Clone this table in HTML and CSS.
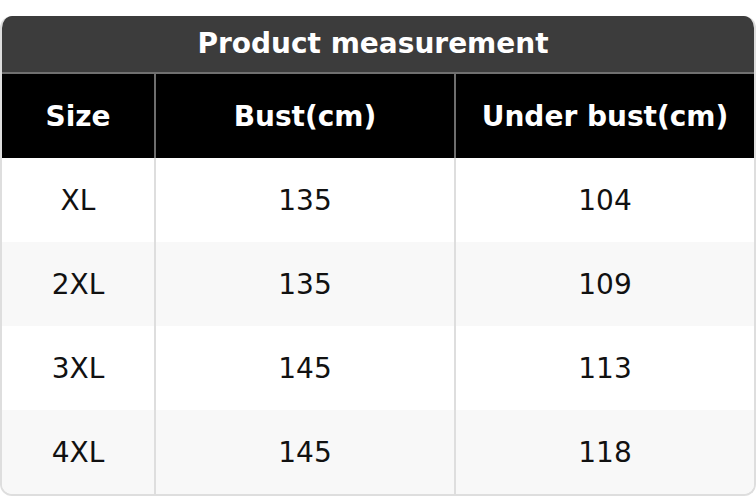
FILE: index.html
```html
<!DOCTYPE html>
<html>
<head>
<meta charset="utf-8">
<link rel="stylesheet" href="styles.css">
</head>
<body>
<div class="card">
  <div class="title">Product measurement</div>
  <table class="sizes">
    <colgroup>
      <col class="c1"><col class="c2"><col class="c3">
    </colgroup>
    <thead>
      <tr><th>Size</th><th>Bust(cm)</th><th>Under bust(cm)</th></tr>
    </thead>
    <tbody>
      <tr><td>XL</td><td>135</td><td>104</td></tr>
      <tr><td>2XL</td><td>135</td><td>109</td></tr>
      <tr><td>3XL</td><td>145</td><td>113</td></tr>
      <tr><td>4XL</td><td>145</td><td>118</td></tr>
    </tbody>
  </table>
</div>
</body>
</html>
```
FILE: styles.css
```css
html, body {
  margin: 0;
  padding: 0;
  background: #ffffff;
}
body {
  padding-top: 16px;
  font-family: "DejaVu Sans", sans-serif;
}
.card {
  width: 756px;
  box-sizing: border-box;
  border: 2px solid #dedede;
  border-top: none;
  border-radius: 12px;
  overflow: hidden;
}
.title {
  height: 56px;
  line-height: 56px;
  padding-right: 10px;
  background: #3c3c3c;
  color: #ffffff;
  font-weight: bold;
  font-size: 28px;
  text-align: center;
  border-bottom: 2px solid #707070;
}
.sizes {
  width: 100%;
  border-collapse: collapse;
  table-layout: fixed;
}
.c1 { width: 153px; }
.c2 { width: 300px; }
.sizes th {
  height: 84px;
  padding: 0;
  background: #000000;
  color: #ffffff;
  font-weight: bold;
  font-size: 28px;
  text-align: center;
  border-right: 2px solid #6e6e6e;
}
.sizes td {
  height: 84px;
  padding: 0;
  color: #111111;
  font-size: 28px;
  text-align: center;
  border-right: 2px solid #dedede;
}
.sizes th:last-child, .sizes td:last-child {
  border-right: none;
}
.sizes tbody tr:nth-child(even) td {
  background: #f8f8f8;
}
```
